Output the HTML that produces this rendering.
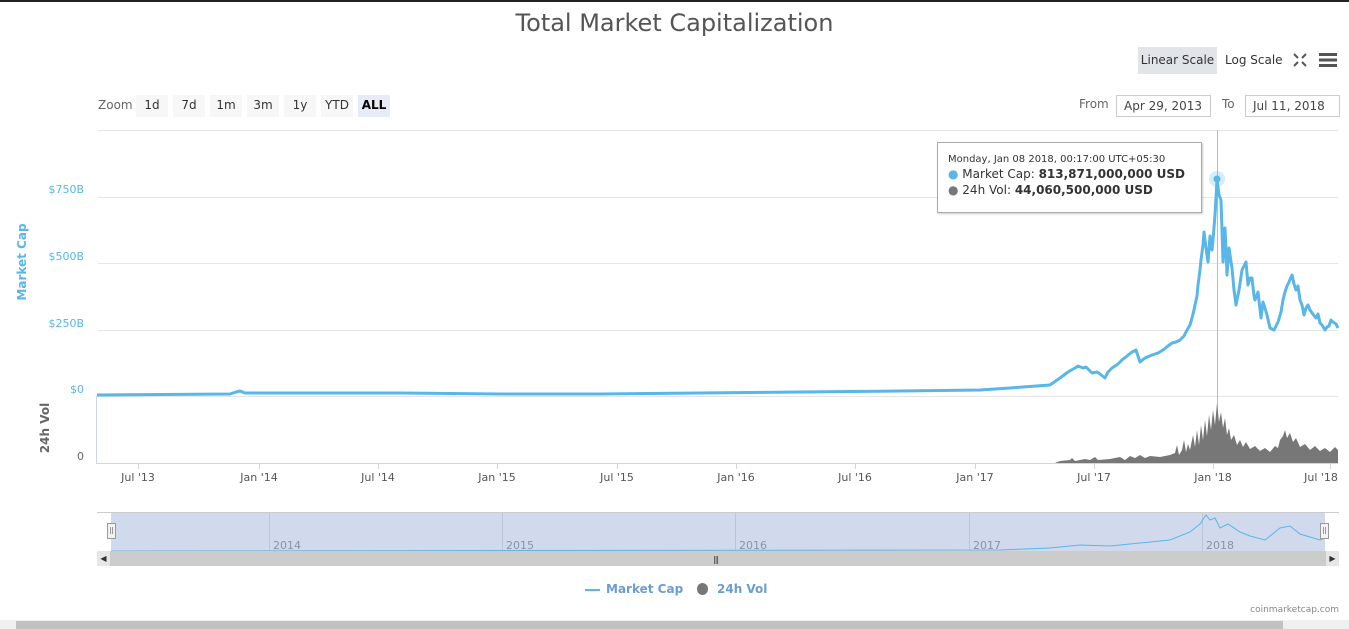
<!DOCTYPE html>
<html><head><meta charset="utf-8"><style>
body{margin:0;width:1349px;height:629px;overflow:hidden;background:#fff;font-family:"DejaVu Sans","Liberation Sans",sans-serif;position:relative}
.a{position:absolute;white-space:nowrap}
.btn{position:absolute;top:95px;height:22px;background:#f7f7f7;font-size:12px;color:#333;text-align:center;line-height:21px}
.inp{position:absolute;top:95px;height:20px;border:1px solid #ccc;font-size:12px;color:#444;line-height:20px;padding-left:7px;box-sizing:content-box}
.yl{position:absolute;right:1265px;font-size:11px;color:#58b6e8;text-align:right}
.xl{position:absolute;top:471px;font-size:11px;color:#555;transform:translateX(-50%);white-space:nowrap}
</style></head><body>
<div class="a" style="left:0;top:0;width:1349px;height:2px;background:#222"></div>
<div class="a" style="left:0;width:1349px;top:9px;text-align:center;font-size:24px;color:#555;font-family:'DejaVu Sans',sans-serif">Total Market Capitalization</div>
<div class="a" style="left:1138px;top:47px;width:79px;height:27px;background:#e1e4e8;font-size:12px;color:#333;line-height:26px;text-align:center">Linear Scale</div>
<div class="a" style="left:1225px;top:47px;font-size:12px;color:#333;line-height:26px">Log Scale</div>
<svg class="a" style="left:1292px;top:52px" width="16" height="16" viewBox="0 0 16 16" stroke="#555" stroke-width="2" fill="none"><path d="M2 2l4 4M14 2l-4 4M2 14l4-4M14 14l-4-4"/></svg>
<svg class="a" style="left:1318px;top:52px" width="20" height="16"><rect x="1" y="1" width="18" height="3" fill="#555"/><rect x="1" y="6.5" width="18" height="3" fill="#555"/><rect x="1" y="12" width="18" height="3" fill="#555"/></svg>
<div class="a" style="left:98px;top:98px;font-size:12px;color:#666">Zoom</div>
<div class="btn" style="left:136px;width:32px">1d</div>
<div class="btn" style="left:173px;width:32px">7d</div>
<div class="btn" style="left:210px;width:32px">1m</div>
<div class="btn" style="left:247px;width:32px">3m</div>
<div class="btn" style="left:284px;width:32px">1y</div>
<div class="btn" style="left:321px;width:32px">YTD</div>
<div class="btn" style="left:358px;width:32px;background:#e6ebf5;font-weight:bold;color:#000">ALL</div>
<div class="a" style="left:1079px;top:97px;font-size:12px;color:#666">From</div>
<div class="inp" style="left:1116px;width:86px">Apr 29, 2013</div>
<div class="a" style="left:1222px;top:97px;font-size:12px;color:#666">To</div>
<div class="inp" style="left:1245px;width:86px">Jul 11, 2018</div>

<div class="yl" style="top:183px">$750B</div>
<div class="yl" style="top:250px">$500B</div>
<div class="yl" style="top:317px">$250B</div>
<div class="yl" style="top:383px">$0</div>
<div class="yl" style="top:450px;color:#666">0</div>
<div class="a" style="left:22px;top:262px;transform:translate(-50%,-50%) rotate(-90deg);font-size:12px;font-weight:bold;color:#58b6e8">Market Cap</div>
<div class="a" style="left:45px;top:428px;transform:translate(-50%,-50%) rotate(-90deg);font-size:12px;font-weight:bold;color:#666">24h Vol</div>

<svg class="a" style="left:0;top:0" width="1349" height="500">
<g stroke="#e6e6e6" stroke-width="1"><path d="M98 130.5H1338M98 197.5H1338M98 263.5H1338M98 330.5H1338M98 396.5H1338"/></g>
<path d="M96.5 396V463M96 463.5H1338" stroke="#ccd6eb"/>
<g stroke="#ccd6eb"><path d="M138.5 463v6M259.5 463v6M378.5 463v6M497.5 463v6M617.5 463v6M736.5 463v6M855.5 463v6M975.5 463v6M1094.5 463v6M1213.5 463v6M1330.5 463v6"/></g>
<path d="M1217.5 130V463" stroke="#bbb"/>
<path fill="#777" d="M1055 463 L1060 461 1070 460 1072 458 1075 461 1085 459 1090 460 1095 457 1098 460 1110 459 1120 457 1125 460 1130 456 1135 458 1140 455 1145 458 1150 456 1160 457 1170 455 1175 453 1177 445 1179 455 1182 450 1184 440 1186 452 1188 444 1190 450 1193 435 1195 447 1197 430 1199 445 1201 425 1203 440 1205 420 1207 436 1209 415 1211 430 1213 410 1215 425 1217 403 1219 422 1221 412 1223 428 1225 418 1227 435 1229 428 1231 440 1234 435 1237 445 1240 440 1243 447 1246 442 1250 449 1255 446 1260 451 1265 448 1270 452 1275 446 1278 448 1280 440 1283 436 1285 430 1287 438 1290 433 1293 442 1296 438 1300 447 1305 444 1310 450 1315 446 1320 451 1325 448 1330 452 1335 447 1338 450 L1338 463Z"/>
<path fill="none" stroke="#58b6e8" stroke-width="3" stroke-linejoin="round" d="M97 395 L230 394 236 392 240 391 245 393 250 393 300 393 400 393 500 394 600 394 700 393 800 392 900 391 980 390 1010 388 1050 385 1060 378 1068 372 1075 368 1078 366 1083 368 1086 367 1092 373 1097 372 1100 374 1105 378 1108 372 1112 368 1118 364 1122 360 1127 356 1132 352 1136 350 1138 356 1140 362 1145 358 1152 355 1158 353 1163 350 1168 346 1172 343 1176 342 1180 340 1184 336 1187 330 1190 325 1192 318 1194 310 1195 305 1197 296 1198 285 1200 270 1201 260 1203 245 1204 232 1206 248 1208 262 1210 236 1212 250 1213 240 1215 215 1217 180 1219 195 1221 200 1222 230 1223 262 1225 228 1227 275 1229 248 1231 262 1232 268 1234 290 1236 305 1238 295 1239 290 1242 270 1244 266 1246 262 1248 285 1250 278 1252 278 1254 296 1255 300 1258 292 1261 318 1263 302 1264 305 1267 315 1270 328 1274 330 1278 322 1281 312 1283 300 1285 292 1287 286 1289 282 1292 275 1294 284 1296 290 1298 286 1300 300 1302 305 1304 315 1306 308 1308 305 1310 310 1312 313 1316 318 1318 314 1320 323 1322 325 1325 330 1327 327 1329 326 1331 320 1333 322 1336 324 1338 328"/>
<circle cx="1217" cy="179" r="8" fill="#58b6e8" opacity=".25"/><circle cx="1217" cy="179" r="3.5" fill="#58b6e8"/>
</svg>
<div class="xl" style="left:138px">Jul '13</div><div class="xl" style="left:259px">Jan '14</div><div class="xl" style="left:378px">Jul '14</div><div class="xl" style="left:497px">Jan '15</div><div class="xl" style="left:617px">Jul '15</div><div class="xl" style="left:736px">Jan '16</div><div class="xl" style="left:855px">Jul '16</div><div class="xl" style="left:975px">Jan '17</div><div class="xl" style="left:1094px">Jul '17</div><div class="xl" style="left:1213px">Jan '18</div><div class="xl" style="left:1321px">Jul '18</div>

<div class="a" style="left:937px;top:142px;width:263px;height:69px;background:rgba(255,255,255,.95);border:1px solid #aaa;box-shadow:1px 1px 2px rgba(0,0,0,.2)"></div>
<div class="a" style="left:948px;top:154px;font-size:10px;color:#333">Monday, Jan 08 2018, 00:17:00 UTC+05:30</div>
<div class="a" style="left:948px;top:167px;font-size:12px;color:#333"><span style="color:#58b6e8">●</span> Market Cap: <b>813,871,000,000 USD</b></div>
<div class="a" style="left:948px;top:183px;font-size:12px;color:#333"><span style="color:#777">●</span> 24h Vol: <b>44,060,500,000 USD</b></div>

<div class="a" style="left:97px;top:512px;width:1242px;height:1px;background:#ccc"></div>
<div class="a" style="left:111px;top:513px;width:1214px;height:38px;background:#d1d9ec"></div>
<svg class="a" style="left:0;top:500px" width="1349" height="60">
<g stroke="#bcc6d8"><path d="M269.5 13v38M502.5 13v38M735.5 13v38M969.5 13v38M1202.5 13v38"/></g>
<g font-size="11" fill="#8a93a6" font-family="DejaVu Sans,sans-serif"><text x="273" y="49">2014</text><text x="506" y="49">2015</text><text x="739" y="49">2016</text><text x="973" y="49">2017</text><text x="1206" y="49">2018</text></g>
<path fill="none" stroke="#58b6e8" stroke-width="1" d="M111 51 L1000 50 1050 48 1080 45 1110 46 1140 43 1170 40 1190 32 1200 24 1206 15 1210 20 1215 18 1220 28 1228 24 1240 32 1250 36 1265 40 1280 28 1290 26 1300 34 1320 40 1325 38"/>
<rect x="107.5" y="23.5" width="8" height="15" fill="#f2f2f2" stroke="#999"/><path d="M110.5 27v7M112.5 27v7" stroke="#999"/>
<rect x="1320.5" y="23.5" width="8" height="15" fill="#f2f2f2" stroke="#999"/><path d="M1323.5 27v7M1325.5 27v7" stroke="#999"/>
</svg>
<div class="a" style="left:97px;top:551px;width:1242px;height:15px;background:#ccc"></div>
<div class="a" style="left:97px;top:551px;width:13px;height:15px;background:#e6e6e6;font-size:8px;line-height:15px;text-align:center;color:#333">◀</div>
<div class="a" style="left:1326px;top:551px;width:13px;height:15px;background:#e6e6e6;font-size:8px;line-height:15px;text-align:center;color:#333">▶</div>
<div class="a" style="left:713px;top:555px;font-size:8px;color:#333;letter-spacing:-1px">|||</div>

<div class="a" style="left:585px;top:589px;width:15px;height:2px;background:#58b6e8"></div>
<div class="a" style="left:606px;top:582px;font-size:12px;font-weight:bold;color:#6a9ed3">Market Cap</div>
<div class="a" style="left:697px;top:583px;width:11px;height:12px;border-radius:50%;background:#777"></div>
<div class="a" style="left:717px;top:582px;font-size:12px;font-weight:bold;color:#6a9ed3">24h Vol</div>
<div class="a" style="right:10px;top:605px;font-size:9px;color:#888">coinmarketcap.com</div>
<div class="a" style="left:0;top:620px;width:1349px;height:9px;background:#f0f0f0"></div>
<div class="a" style="left:16px;top:621px;width:1267px;height:8px;background:#c1c1c1"></div>
</body></html>
